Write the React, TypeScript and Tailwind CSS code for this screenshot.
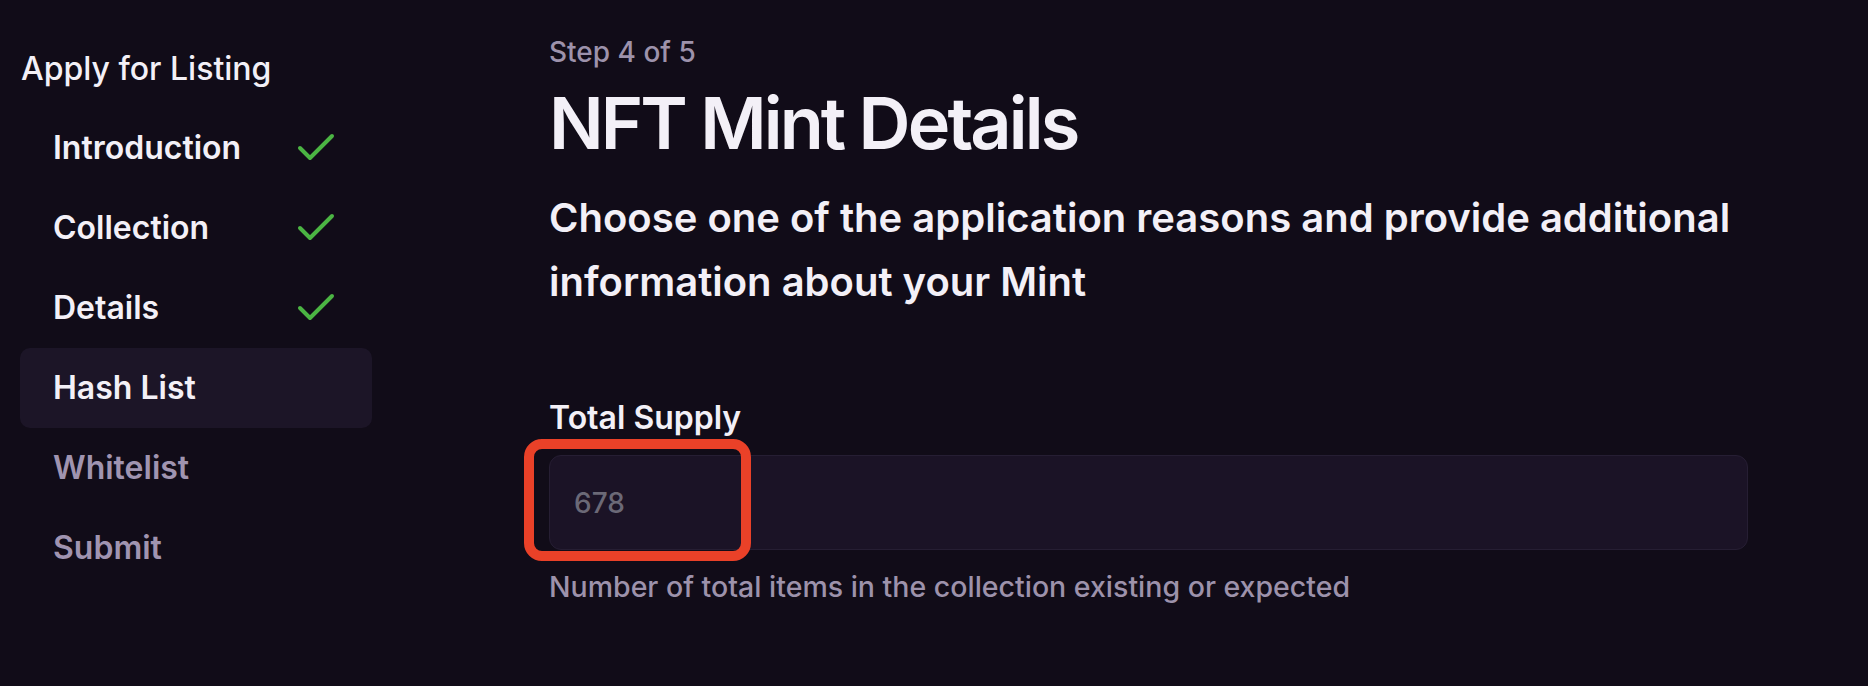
import { Check } from "lucide-react";

type Step = {
  label: string;
  state: "done" | "current" | "todo";
};

const steps: Step[] = [
  { label: "Introduction", state: "done" },
  { label: "Collection", state: "done" },
  { label: "Details", state: "done" },
  { label: "Hash List", state: "current" },
  { label: "Whitelist", state: "todo" },
  { label: "Submit", state: "todo" },
];

function StepItem({ step }: { step: Step }) {
  const base = "flex h-[80px] items-center justify-between rounded-[10px] pl-[33px] pr-[32px] text-[32px] font-semibold leading-[36px]";
  const tone =
    step.state === "current"
      ? "bg-[#1c1527] text-[#f3f0f7]"
      : step.state === "done"
        ? "text-[#f3f0f7]"
        : "text-[#a094b0]";

  return (
    <li className={`${base} ${tone}`}>
      <span>{step.label}</span>
      {step.state === "done" && <Check size={48} strokeWidth={2} className="shrink-0 text-[#4bb543]" />}
    </li>
  );
}

export default function App() {
  return (
    <main className="flex min-h-screen w-full bg-[#110c18] font-['Inter',sans-serif] text-[#f3f0f7] antialiased">
      <aside className="w-[372px] shrink-0 pl-[20px] pt-[51px]">
        <h2 className="pl-[1px] text-[32px] font-medium leading-[36px] text-[#f3f0f7]">Apply for Listing</h2>
        <ol className="mt-[21px] flex flex-col">
          {steps.map((step) => (
            <StepItem key={step.label} step={step} />
          ))}
        </ol>
      </aside>

      <section className="flex-1 pl-[177px] pt-[32px]">
        <div className="max-w-[1199px]">
          <p className="text-[28px] font-medium leading-[40px] text-[#9d92ab]">Step 4 of 5</p>
          <h1 className="mt-[11px] text-[72px] font-semibold leading-[80px] tracking-[-0.04em] text-[#f3f0f7]">
            NFT Mint Details
          </h1>
          <p className="mt-[23px] text-[40px] font-semibold leading-[64px] text-[#f3f0f7]">
            Choose one of the application reasons and provide additional information about your Mint
          </p>

          <div className="mt-[86px]">
            <label htmlFor="total-supply" className="block text-[32px] font-semibold leading-[36px] text-[#f3f0f7]">
              Total Supply
            </label>
            <div className="relative mt-[19px]">
              <input
                id="total-supply"
                type="text"
                placeholder="678"
                className="block h-[95px] w-full rounded-[12px] border border-[#261e33] bg-[#1b1326] px-[24px] text-[28px] font-medium text-[#f3f0f7] outline-none placeholder:text-[#6b6977]"
              />
              <div className="pointer-events-none absolute left-[-25px] top-[-16px] h-[122px] w-[227px] rounded-[18px] border-[10px] border-[#ea4128]" />
            </div>
            <p className="mt-[19px] text-[28.5px] font-medium leading-[36px] text-[#9d92ab]">
              Number of total items in the collection existing or expected
            </p>
          </div>
        </div>
      </section>
    </main>
  );
}
